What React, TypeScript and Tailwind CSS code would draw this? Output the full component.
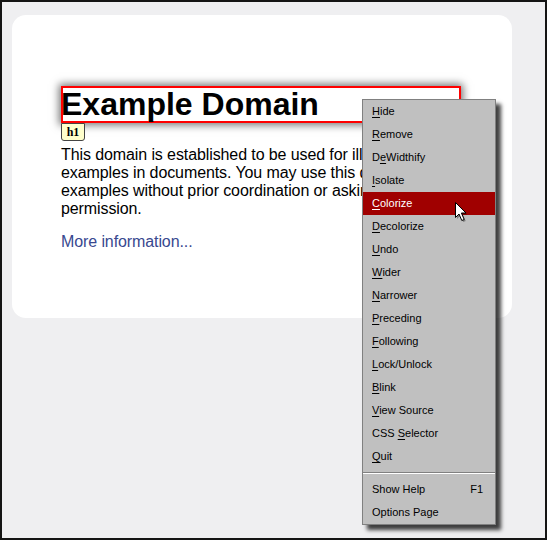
import React from 'react'

type Item = { pre: string; key: string; post: string; hot?: boolean }

const items: Item[] = [
  { pre: '', key: 'H', post: 'ide' },
  { pre: '', key: 'R', post: 'emove' },
  { pre: 'D', key: 'e', post: 'Widthify' },
  { pre: '', key: 'I', post: 'solate' },
  { pre: '', key: 'C', post: 'olorize', hot: true },
  { pre: '', key: 'D', post: 'ecolorize' },
  { pre: '', key: 'U', post: 'ndo' },
  { pre: '', key: 'W', post: 'ider' },
  { pre: '', key: 'N', post: 'arrower' },
  { pre: '', key: 'P', post: 'receding' },
  { pre: '', key: 'F', post: 'ollowing' },
  { pre: '', key: 'L', post: 'ock/Unlock' },
  { pre: '', key: 'B', post: 'link' },
  { pre: '', key: 'V', post: 'iew Source' },
  { pre: 'CSS ', key: 'S', post: 'elector' },
  { pre: '', key: 'Q', post: 'uit' },
]

const Cursor = () => (
  <svg width="14" height="22" viewBox="0 0 14 22" className="absolute left-[91px] top-[9px]">
    <path d="M1.5 1.5 L1.5 16.5 L5 13 L7.8 19.5 L10.2 18.5 L7.4 12 L12 12 Z" fill="#000" opacity="0.35" transform="translate(1.5 1.5)" />
    <path d="M1.5 1.5 L1.5 16.5 L5 13 L7.8 19.5 L10.2 18.5 L7.4 12 L12 12 Z" fill="#fff" stroke="#000" strokeWidth="1" strokeLinejoin="miter" />
  </svg>
)

const ContextMenu = () => (
  <div className="absolute left-[360px] top-[97px] w-[134px] bg-[#c0c0c0] border border-[#808080] shadow-[5px_5px_4px_rgba(0,0,0,0.75)] font-['Liberation_Sans',Arial,sans-serif] text-[11px] text-black">
    {items.map((it, i) => (
      <div
        key={i}
        className={`relative h-[23px] flex items-center pl-[9px] ${it.hot ? 'bg-[#a00000] text-white' : ''}`}
      >
        <span>
          {it.pre}
          <span className="underline underline-offset-2">{it.key}</span>
          {it.post}
        </span>
        {it.hot && <Cursor />}
      </div>
    ))}
    <div className="h-[10px] flex flex-col justify-center">
      <div className="h-px bg-[#808080]" />
      <div className="h-px bg-white" />
    </div>
    <div className="h-[23px] flex items-center justify-between pl-[9px] pr-[12px]">
      <span>Show Help</span>
      <span>F1</span>
    </div>
    <div className="h-[23px] flex items-center pl-[9px]">
      <span>Options Page</span>
    </div>
  </div>
)

export default function App() {
  return (
    <div className="relative w-[547px] h-[540px] border-2 border-[#141414] bg-[#efeff1] overflow-hidden font-['Liberation_Sans',Arial,sans-serif]">
      <div className="ml-[10px] mt-[13px] w-[500px] h-[303px] rounded-[14px] bg-white pl-[49px] pr-[51px] pt-[71px]">
        <h1 className="relative h-[37px] leading-[37px] text-[32px] font-bold text-black shadow-[0_0_8px_2px_rgba(0,0,0,0.55)]">
          <span className="absolute inset-0 border-2 border-[#ff0000] bg-white" />
          <span className="relative">Example Domain</span>
          <span className="absolute left-0 top-full h-[18px] w-[24px] bg-[#ffffcc] border border-[#444] rounded-b-[3px] flex items-center justify-center font-['Liberation_Serif',serif] text-[12px] leading-none font-bold">
            h1
          </span>
        </h1>
        <p className="mt-[23px] text-[16px] leading-[18px] tracking-[-0.1px] text-black">
          This domain is established to be used for illustrative examples in documents. You may use this domain in examples without prior coordination or asking for permission.
        </p>
        <p className="mt-[15px] text-[16px] leading-[18px] tracking-[-0.1px]">
          <a className="text-[#38488f]">More information...</a>
        </p>
      </div>
      <ContextMenu />
    </div>
  )
}
